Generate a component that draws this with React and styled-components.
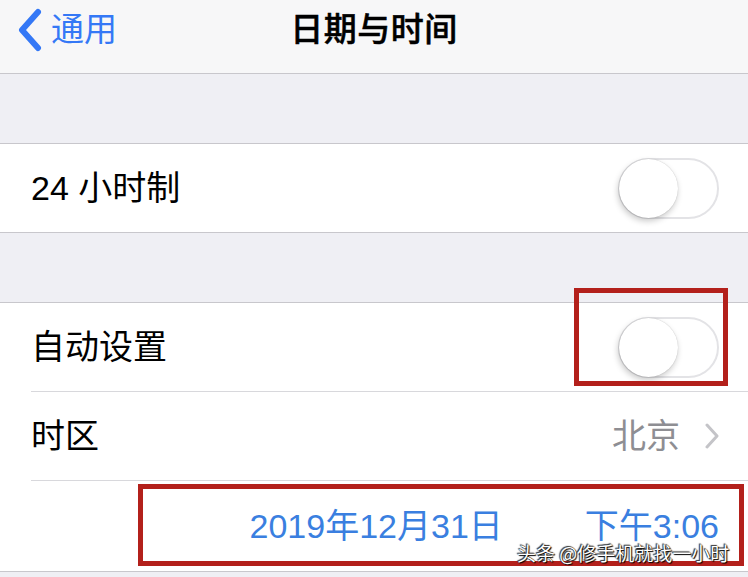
import React from "react";
import styled, { createGlobalStyle } from "styled-components";

const Global = createGlobalStyle`
  html, body { margin: 0; padding: 0; background: #efeff4; }
  body { font-family: "Liberation Sans", "Noto Sans CJK SC", sans-serif; }
  * { box-sizing: border-box; }
`;

const Page = styled.div`
  position: relative;
  width: 748px;
  height: 577px;
  overflow: hidden;
  background: #efeff4;
  font-family: "Liberation Sans", "Noto Sans CJK SC", sans-serif;
`;

const NavBar = styled.header`
  height: 74px;
  background: #f7f7f8;
  border-bottom: 1px solid #c8c7cc;
  display: grid;
  grid-template-columns: 1fr auto 1fr;
  align-items: center;
  padding: 0 0 14px 0;
`;

const Back = styled.div`
  display: flex;
  align-items: center;
  gap: 8px;
  padding-left: 17px;
  color: #3478f6;
  font-size: 33px;
  line-height: 1;
`;

const Title = styled.h1`
  margin: 0;
  font-size: 33px;
  font-weight: 500;
  color: #000;
  line-height: 1;
  letter-spacing: 0.5px;
  -webkit-text-stroke: 0.5px #000;
`;

const Spacer = styled.div`
  height: ${(p) => p.$h}px;
  border-bottom: 1px solid #c8c7cc;
  background: #efeff4;
`;

const Group = styled.section`
  background: #fff;
  border-bottom: 1px solid #c8c7cc;
`;

const Row = styled.div`
  position: relative;
  padding-left: 31px;
  background: #fff;
`;

const RowInner = styled.div`
  height: ${(p) => p.$h || 89}px;
  display: flex;
  align-items: center;
  justify-content: ${(p) => p.$justify || "space-between"};
  padding-right: 29px;
  border-bottom: ${(p) => (p.$last ? "none" : "1px solid #d8d8dc")};
  font-size: 34px;
  color: #000;
`;

const Label = styled.span`
  line-height: 1;
`;

const Toggle = styled.div`
  position: relative;
  width: 101px;
  height: 61px;
  border-radius: 31px;
  border: 2px solid #e3e3e6;
  background: #fff;
`;

const Knob = styled.div`
  position: absolute;
  left: -1px;
  top: -1px;
  width: 59px;
  height: 59px;
  border-radius: 50%;
  background: #fff;
  box-shadow: -1px 3px 6px rgba(0, 0, 0, 0.22), 0 0 1px rgba(0, 0, 0, 0.25);
`;

const Detail = styled.div`
  display: flex;
  align-items: center;
  gap: 25px;
  color: #8e8e93;
  font-size: 34px;
  line-height: 1;
`;

const DateText = styled.span`
  color: #3a7fe0;
  font-size: 34px;
  line-height: 1;
  margin-right: ${(p) => p.$mr || 0}px;
`;

const Highlight = styled.div`
  position: absolute;
  border: 5px solid #b3201b;
  pointer-events: none;
`;

const Watermark = styled.div`
  position: absolute;
  left: 517px;
  top: 543px;
  font-size: 19px;
  line-height: 1;
  color: #fff;
  font-family: "Noto Sans CJK SC", sans-serif;
  text-shadow: 0 0 1px #000, 1px 1px 1px #000, -1px -1px 1px #333;
  white-space: nowrap;
`;

const Switch = () => (
  <Toggle>
    <Knob />
  </Toggle>
);

export default function App() {
  return (
    <>
      <Global />
      <Page>
        <NavBar>
          <Back>
            <svg width="26" height="44" viewBox="0 0 26 44">
              <polyline
                points="21,4 5,22 21,40"
                fill="none"
                stroke="#3478f6"
                strokeWidth="6"
                strokeLinecap="round"
                strokeLinejoin="round"
              />
            </svg>
            <span>通用</span>
          </Back>
          <Title>日期与时间</Title>
          <div />
        </NavBar>
        <Spacer $h={70} />
        <Group>
          <Row>
            <RowInner $last $h={88}>
              <Label>24 小时制</Label>
              <Switch />
            </RowInner>
          </Row>
        </Group>
        <Spacer $h={70} />
        <Group>
          <Row>
            <RowInner>
              <Label>自动设置</Label>
              <Switch />
            </RowInner>
            <Highlight style={{ left: 574, top: -15, width: 154, height: 98 }} />
          </Row>
          <Row>
            <RowInner>
              <Label>时区</Label>
              <Detail>
                <span>北京</span>
                <svg width="14" height="26" viewBox="0 0 14 26">
                  <polyline
                    points="2,2 12,13 2,24"
                    fill="none"
                    stroke="#c4c4c8"
                    strokeWidth="3"
                    strokeLinecap="round"
                    strokeLinejoin="round"
                  />
                </svg>
              </Detail>
            </RowInner>
          </Row>
          <Row>
            <RowInner $last $justify="flex-end" $h={90}>
              <DateText $mr={82}>2019年12月31日</DateText>
              <DateText>下午3:06</DateText>
            </RowInner>
            <Highlight style={{ left: 138, top: 3, width: 606, height: 82 }} />
          </Row>
        </Group>
        <Watermark>头条 @修手机就找一小时</Watermark>
      </Page>
    </>
  );
}
